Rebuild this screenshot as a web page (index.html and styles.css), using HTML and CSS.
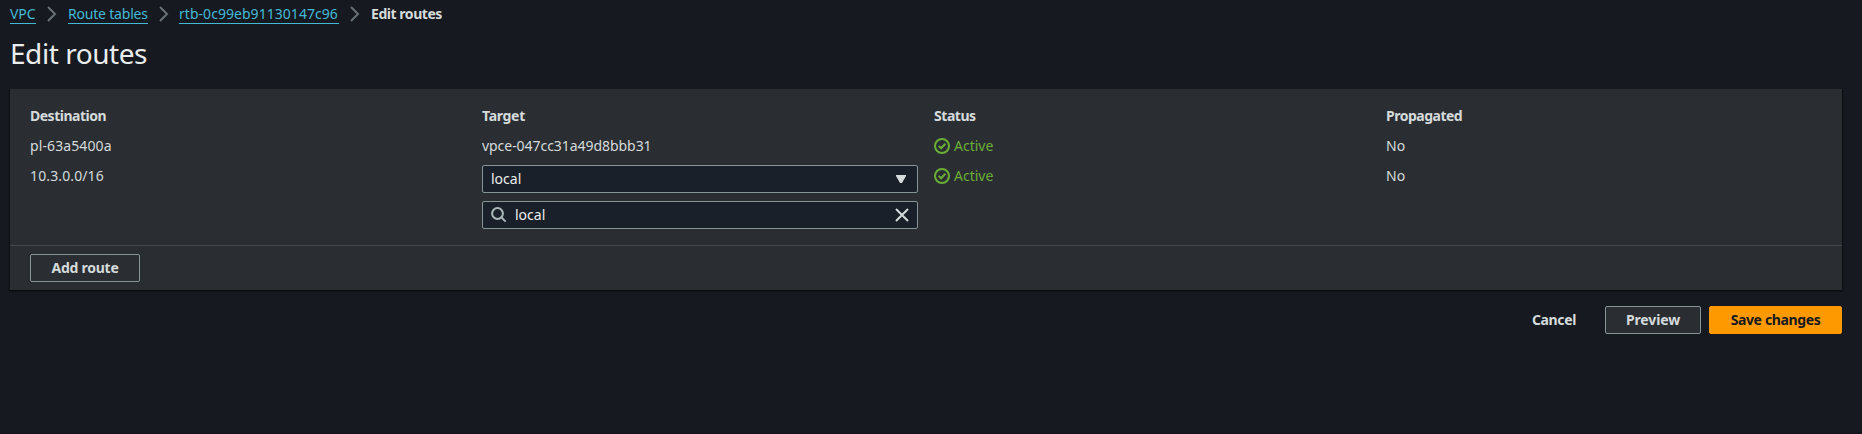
FILE: index.html
```html
<!DOCTYPE html>
<html lang="en">
<head>
<meta charset="utf-8">
<title>Edit routes</title>
<link rel="stylesheet" href="styles.css">
</head>
<body>
<main class="page">
  <nav class="crumbs">
    <a class="crumb crumb-vpc" href="#">VPC</a>
    <svg class="chevron" viewBox="0 0 10 16"><path d="M1 1l7 7-7 7"/></svg>
    <a class="crumb crumb-tables" href="#">Route tables</a>
    <svg class="chevron" viewBox="0 0 10 16"><path d="M1 1l7 7-7 7"/></svg>
    <a class="crumb crumb-id" href="#">rtb-0c99eb91130147c96</a>
    <svg class="chevron" viewBox="0 0 10 16"><path d="M1 1l7 7-7 7"/></svg>
    <span class="crumb-current">Edit routes</span>
  </nav>
  <h1 class="title">Edit routes</h1>
  <section class="panel">
    <div class="routes">
      <div class="head"><span class="t-destination">Destination</span></div>
      <div class="head"><span class="t-target">Target</span></div>
      <div class="head"><span class="t-status">Status</span></div>
      <div class="head"><span class="t-propagated">Propagated</span></div>

      <div class="cell"><span class="t-prefix">pl-63a5400a</span></div>
      <div class="cell"><span class="t-endpoint">vpce-047cc31a49d8bbb31</span></div>
      <div class="cell status"><svg class="check" viewBox="0 0 16 16"><circle cx="8" cy="8" r="7"/><path d="M4.7 7.9l2.4 2.4 4.3-4.6"/></svg><span class="t-active">Active</span></div>
      <div class="cell"><span class="t-no">No</span></div>

      <div class="cell"><span class="t-cidr">10.3.0.0/16</span></div>
      <div class="fields">
        <div class="field">
          <span class="value">local</span>
          <svg class="caret" viewBox="0 0 10 8"><path d="M0 0h10v1L6 8H4L0 1z"/></svg>
        </div>
        <div class="field">
          <svg class="search" viewBox="0 0 16 16"><circle cx="6.5" cy="6.5" r="5.4"/><path d="M10.3 10.3l4.3 4.3"/></svg>
          <span class="value">local</span>
          <svg class="clear" viewBox="0 0 14 14"><path d="M1 1l12 12M13 1L1 13"/></svg>
        </div>
      </div>
      <div class="cell status"><svg class="check" viewBox="0 0 16 16"><circle cx="8" cy="8" r="7"/><path d="M4.7 7.9l2.4 2.4 4.3-4.6"/></svg><span class="t-active">Active</span></div>
      <div class="cell"><span class="t-no">No</span></div>
    </div>
    <div class="panel-footer"><button class="button button-add"><span>Add route</span></button></div>
  </section>
  <div class="actions">
    <button class="button button-link"><span>Cancel</span></button>
    <button class="button button-preview"><span>Preview</span></button>
    <button class="button button-primary"><span>Save changes</span></button>
  </div>
</main>
</body>
</html>
```
FILE: styles.css
```css
* { box-sizing: border-box; }
body {
  margin: 0;
  background: #16191f;
  color: #d5dbdb;
  font: 14px/22px "Noto Sans", "Open Sans", sans-serif;
}
.page {
  height: 434px;
  padding: 3px 20px 0 10px;
  border-bottom: 2px solid #14151d;
}
svg { display: block; flex: none; fill: none; }
span, .crumb { white-space: nowrap; }

.crumbs { display: flex; align-items: center; height: 22px; }
.crumb {
  height: 20px;
  line-height: 20px;
  color: #44b9d6;
  text-decoration: none;
  border-bottom: 1px solid #44b9d6;
}
.crumb-vpc { width: 26px; letter-spacing: -0.1px; }
.crumb-tables { width: 80px; letter-spacing: -0.2px; }
.crumb-id { width: 160px; letter-spacing: 0.04px; }
.crumb-current { font-weight: 700; letter-spacing: -0.45px; }
.chevron { width: 10px; height: 16px; margin: 0 11px; stroke: #687078; stroke-width: 2; }
.crumb-tables + .chevron { margin-right: 10px; }

.title {
  margin: 10px 0 0;
  font-size: 28px;
  line-height: 36px;
  font-weight: 400;
  color: #eaeded;
  letter-spacing: -0.45px;
}

.panel {
  margin-top: 18px;
  height: 201px;
  background: #2a2e33;
  box-shadow: 0 1px 1px #0a0c10, 1px 1px 1px #0f1115, -1px 1px 1px #0f1115;
}
.routes {
  display: grid;
  grid-template-columns: repeat(4, 1fr);
  grid-template-rows: 22px 22px 64px;
  gap: 8px 16px;
  height: 156px;
  padding: 16px 20px 0;
}
.head { font-weight: 700; height: 22px; }
.t-destination { letter-spacing: -0.5px; }
.t-target { letter-spacing: -0.3px; }
.t-status { letter-spacing: -0.45px; }
.t-propagated { letter-spacing: -0.5px; }
.t-prefix { letter-spacing: 0.1px; }
.t-endpoint { letter-spacing: -0.05px; }
.t-cidr { letter-spacing: 0.12px; }
.cell { height: 22px; }
.status { display: flex; align-items: center; gap: 4px; color: #6aaf35; }
.check { width: 16px; height: 16px; stroke: #6aaf35; stroke-width: 2; }
.fields { display: flex; flex-direction: column; gap: 8px; }
.field {
  display: flex;
  align-items: center;
  height: 28px;
  padding: 0 8px;
  background: #1a2029;
  border: 1px solid #879596;
  border-radius: 2px;
}
.value { flex: 1; color: #eaeded; }
.caret { width: 10px; height: 8px; margin-right: 3px; fill: #d5dbdb; }
.search { width: 16px; height: 16px; margin-right: 8px; stroke: #aab7b8; stroke-width: 2; }
.clear { width: 14px; height: 14px; stroke: #d5dbdb; stroke-width: 2; }

.panel-footer {
  height: 45px;
  padding: 8px 20px;
  border-top: 1px solid #414750;
}
.button {
  display: flex;
  align-items: center;
  justify-content: center;
  height: 28px;
  padding: 0;
  font: inherit;
  font-weight: 700;
  color: #d5dbdb;
  background: #2a2e33;
  border: 1px solid #879596;
  border-radius: 2px;
}
.button-add { width: 110px; letter-spacing: -0.25px; }
.actions { display: flex; justify-content: flex-end; gap: 8px; margin-top: 16px; }
.button-link { width: 86px; background: transparent; border-color: transparent; letter-spacing: -0.35px; }
.button-preview { width: 96px; letter-spacing: -0.12px; }
.button-primary { width: 133px; color: #16191f; background: #ff9900; border-color: #ff9900; letter-spacing: -0.37px; }
```
